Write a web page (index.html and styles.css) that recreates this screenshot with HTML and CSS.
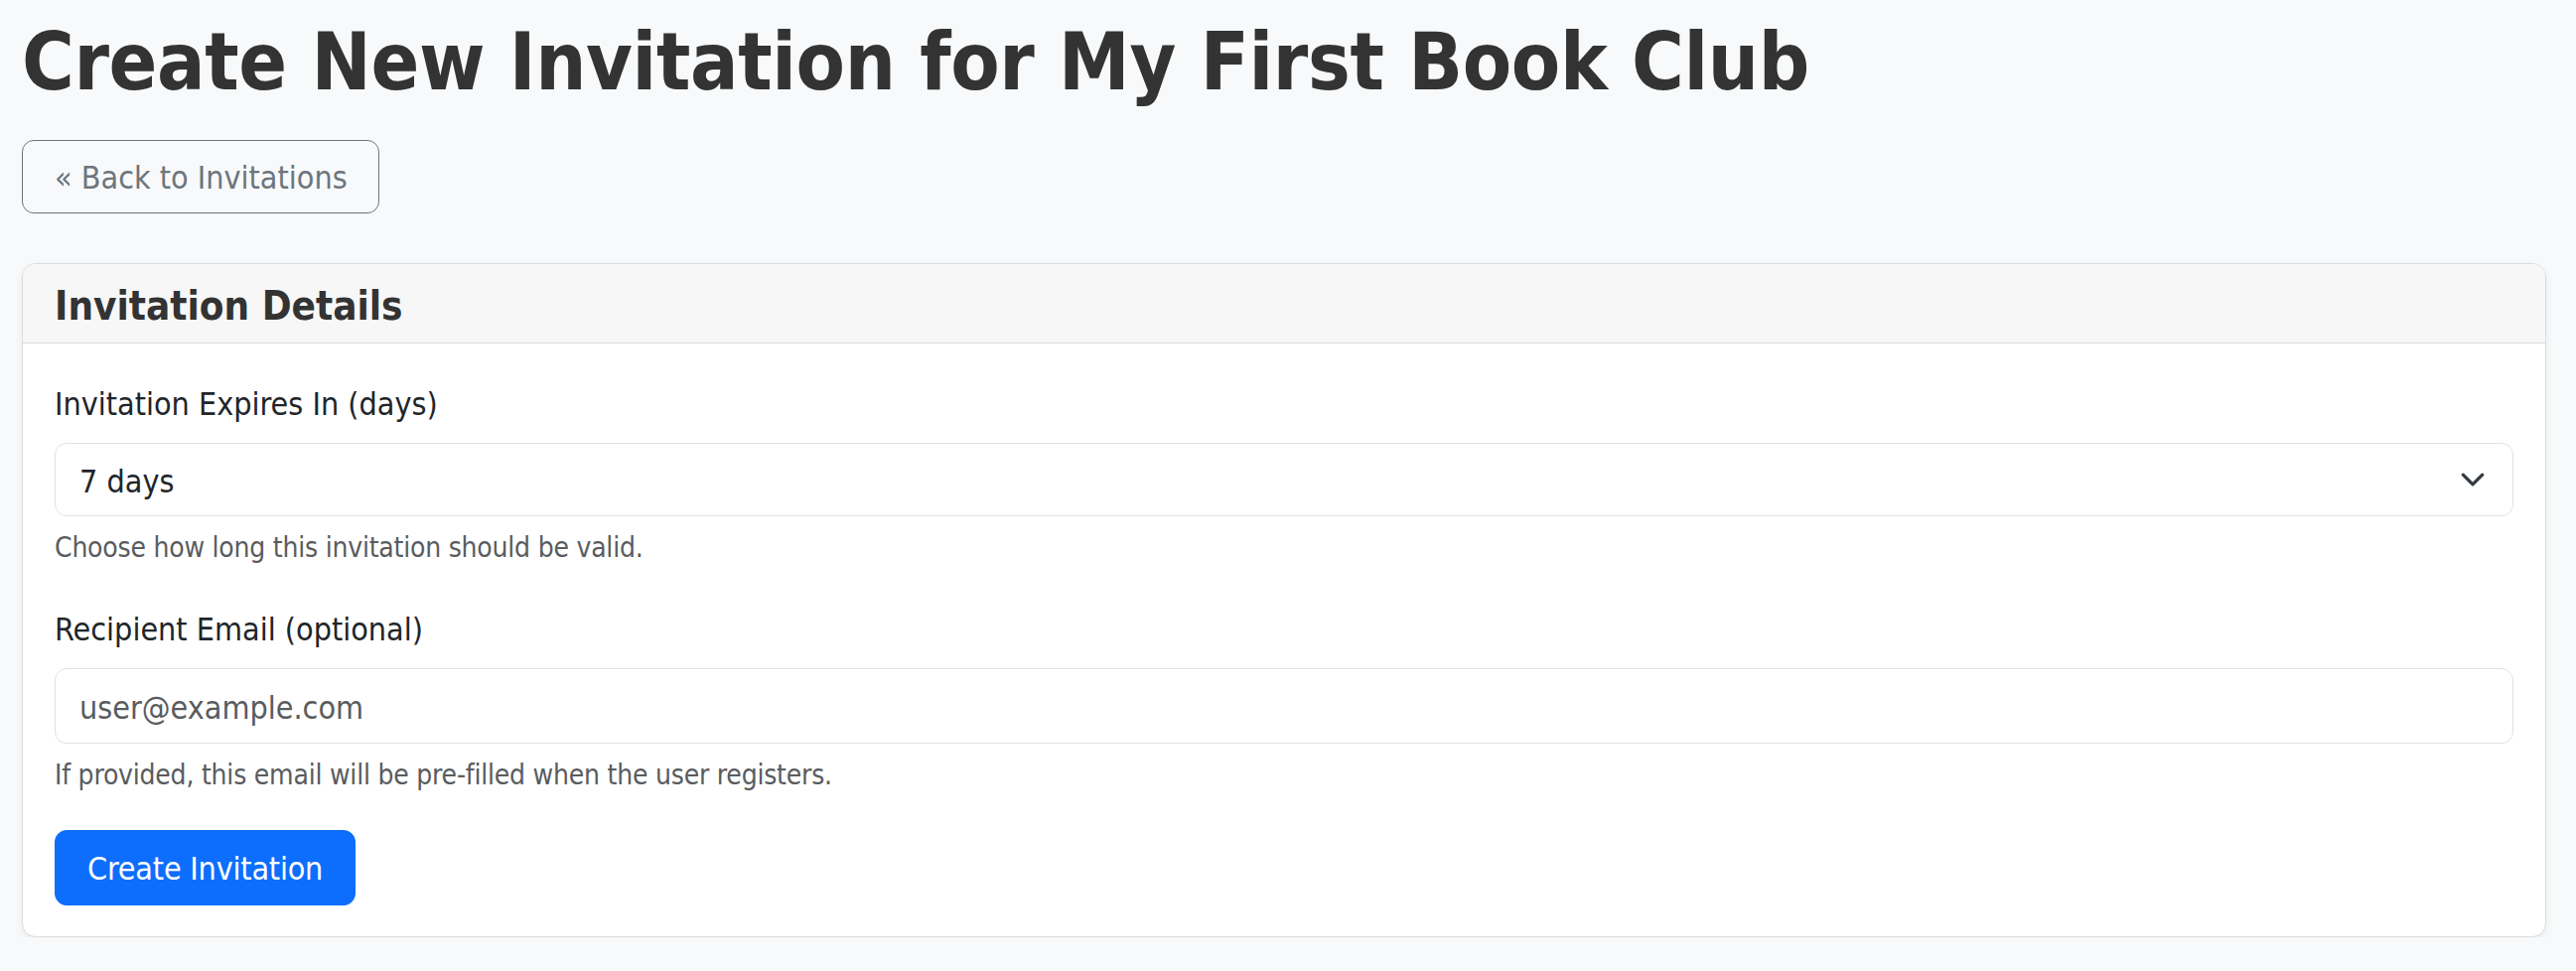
FILE: index.html
```html
<!DOCTYPE html>
<html lang="en">
<head>
<meta charset="utf-8">
<title>Create New Invitation</title>
<link rel="stylesheet" href="styles.css">
</head>
<body>
<main class="page">
  <h1 class="page-title">Create New Invitation for My First Book Club</h1>
  <a class="btn btn-outline" href="#">« Back to Invitations</a>
  <section class="card">
    <header class="card-header">
      <h5 class="card-title">Invitation Details</h5>
    </header>
    <form class="card-body">
      <div class="group">
        <label class="form-label" for="expires">Invitation Expires In (days)</label>
        <div class="select-wrap">
          <select class="form-control form-select" id="expires">
            <option>7 days</option>
          </select>
          <svg class="chevron" viewBox="0 0 16 16" width="26" height="26" aria-hidden="true"><path d="m2 5 6 6 6-6" fill="none" stroke="#343a40" stroke-width="2" stroke-linecap="round" stroke-linejoin="round"/></svg>
        </div>
        <div class="form-text">Choose how long this invitation should be valid.</div>
      </div>
      <div class="group">
        <label class="form-label" for="email">Recipient Email (optional)</label>
        <input class="form-control" type="email" id="email" placeholder="user@example.com">
        <div class="form-text">If provided, this email will be pre-filled when the user registers.</div>
      </div>
      <button type="button" class="btn btn-primary">Create Invitation</button>
    </form>
  </section>
</main>
</body>
</html>
```

FILE: styles.css
```css
* { box-sizing: border-box; }

html, body {
  margin: 0;
  padding: 0;
}

body {
  background: #f8f9fa;
  font-family: "DejaVu Sans Condensed", "DejaVu Sans", "Liberation Sans", sans-serif;
  font-stretch: condensed;
  font-size: 32px;
  line-height: 1.5;
  color: #212529;
}

.page {
  display: flex;
  flex-direction: column;
  align-items: flex-start;
  padding: 15px 30px 0 22px;
}

.page-title {
  margin: 0 0 30px 0;
  font-size: 80px;
  line-height: 96px;
  font-weight: 700;
  letter-spacing: -0.35px;
  color: #333333;
}

.btn {
  display: inline-block;
  font-family: inherit;
  font-stretch: condensed;
  font-size: 32px;
  line-height: 48px;
  padding: 13px 32px 11px;
  border: 1px solid transparent;
  border-radius: 12px;
  text-decoration: none;
  cursor: pointer;
}

.btn-outline {
  color: #6c757d;
  border-color: #6c757d;
  background: transparent;
  margin-bottom: 50px;
  padding-right: 31px;
}

.btn-primary {
  color: #ffffff;
  background: #0d6efd;
  border-color: #0d6efd;
  padding: 14px 32px 12px;
  letter-spacing: -0.2px;
}

.card {
  align-self: stretch;
  background: #ffffff;
  border: 1px solid #dcdcdc;
  border-radius: 14px;
  box-shadow: 0 4px 10px rgba(0, 0, 0, 0.06);
  overflow: hidden;
}

.card-header {
  background: #f7f7f7;
  border-bottom: 1px solid #dcdcdc;
  padding: 18px 32px 13px;
}

.card-title {
  margin: 0;
  font-size: 40px;
  line-height: 48px;
  font-weight: 700;
  color: #333333;
}

.card-body {
  padding: 32px 32px 31px;
  display: flex;
  flex-direction: column;
  align-items: flex-start;
}

.group {
  align-self: stretch;
  margin-bottom: 32px;
}

.group + .group {
  margin-bottom: 34px;
}

.form-label {
  display: block;
  margin: 5px 0 15px;
  line-height: 48px;
}

.select-wrap {
  position: relative;
}

.form-control {
  display: block;
  width: 100%;
  font-family: inherit;
  font-stretch: condensed;
  font-size: 32px;
  line-height: 48px;
  height: 74px;
  padding: 14px 24px 10px;
  color: #212529;
  background: #ffffff;
  border: 1px solid #dee2e6;
  border-radius: 12px;
  outline: none;
}

#email {
  height: 76px;
}

.form-select {
  appearance: none;
  -webkit-appearance: none;
  padding-right: 72px;
}

.form-control::placeholder {
  color: #595c5f;
  opacity: 1;
}

.chevron {
  position: absolute;
  right: 28px;
  top: 24px;
  width: 26px;
  height: 26px;
  pointer-events: none;
}

.form-text {
  margin-top: 11px;
  font-size: 28px;
  line-height: 42px;
  letter-spacing: -0.22px;
  color: #595c5f;
}
```
